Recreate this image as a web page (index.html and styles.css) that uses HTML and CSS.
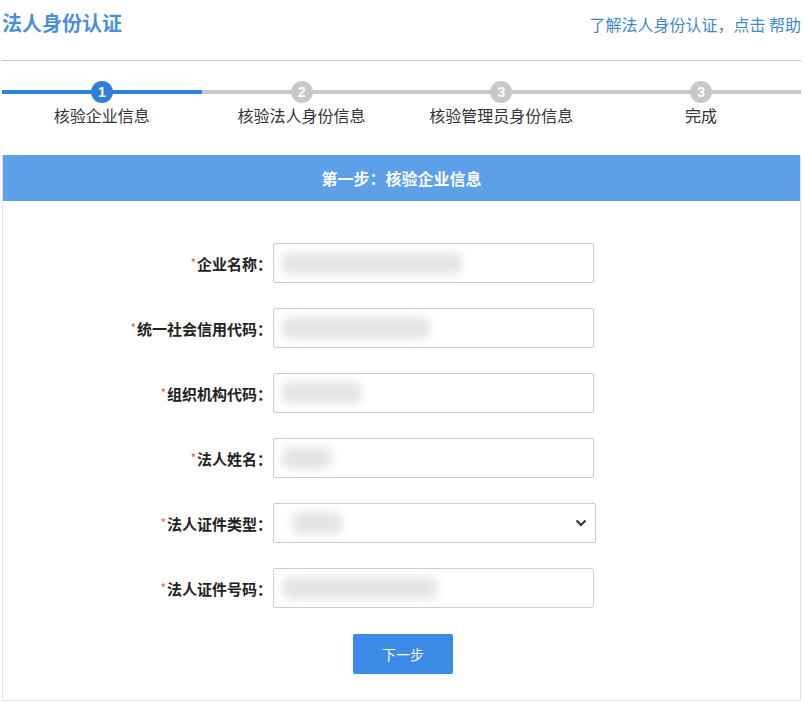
FILE: index.html
```html
<!DOCTYPE html>
<html lang="zh-CN">
<head>
<meta charset="utf-8">
<title>法人身份认证</title>
<link rel="stylesheet" href="styles.css">
</head>
<body>
<div class="page">
  <header class="top">
    <h1 class="title">法人身份认证</h1>
    <a class="help" href="#">了解法人身份认证，点击 帮助</a>
  </header>
  <div class="rule"></div>

  <ol class="steps">
    <li class="step done">
      <div class="track"><span class="dot">1</span></div>
      <div class="label">核验企业信息</div>
    </li>
    <li class="step">
      <div class="track"><span class="dot">2</span></div>
      <div class="label">核验法人身份信息</div>
    </li>
    <li class="step">
      <div class="track"><span class="dot">3</span></div>
      <div class="label">核验管理员身份信息</div>
    </li>
    <li class="step">
      <div class="track"><span class="dot">3</span></div>
      <div class="label">完成</div>
    </li>
  </ol>

  <section class="panel">
    <div class="panel-head">第一步：核验企业信息</div>
    <div class="form">
      <label class="lbl"><i>*</i>企业名称：</label>
      <div class="field"><span class="blur w185"></span></div>

      <label class="lbl"><i>*</i>统一社会信用代码：</label>
      <div class="field"><span class="blur w150"></span></div>

      <label class="lbl"><i>*</i>组织机构代码：</label>
      <div class="field"><span class="blur w85"></span></div>

      <label class="lbl"><i>*</i>法人姓名：</label>
      <div class="field"><span class="blur w50"></span></div>

      <label class="lbl"><i>*</i>法人证件类型：</label>
      <div class="field select"><span class="blur w60 indent"></span>
        <svg class="chev" width="12" height="8" viewBox="0 0 12 8"><path d="M1.5 1.5 L6 6 L10.5 1.5" fill="none" stroke="#333" stroke-width="2"/></svg>
      </div>

      <label class="lbl"><i>*</i>法人证件号码：</label>
      <div class="field"><span class="blur w160"></span></div>

      <div class="actions"><button class="btn" type="button">下一步</button></div>
    </div>
  </section>
</div>
</body>
</html>
```

FILE: styles.css
```css
* { box-sizing: border-box; }
html, body { margin: 0; padding: 0; background: #fff; }
body {
  font-family: "Noto Sans CJK SC", "Noto Sans", "Liberation Sans", sans-serif;
  color: #333;
}
.page { width: 805px; padding: 0 4px 0 2px; }

.top {
  height: 44px;
  display: flex;
  align-items: center;
  justify-content: space-between;
}
.title {
  margin: 0;
  font-size: 20px;
  font-weight: bold;
  color: #4a8fdc;
}
.help {
  font-size: 16px;
  color: #3f88c9;
  text-decoration: none;
  padding-top: 4px;
}
.rule { margin-top: 16px; height: 1px; background: #c9c9c9; }

.steps {
  list-style: none;
  margin: 20px 0 0;
  padding: 0;
  display: grid;
  grid-template-columns: repeat(4, 1fr);
}
.step { display: flex; flex-direction: column; align-items: center; }
.track {
  width: 100%;
  height: 22px;
  display: flex;
  justify-content: center;
  background: linear-gradient(to bottom, transparent 9px, #c8c8c8 9px, #c8c8c8 13px, transparent 13px);
}
.dot {
  width: 22px;
  height: 22px;
  border-radius: 50%;
  background: #c8c8c8;
  color: #fff;
  font-family: "Liberation Sans", sans-serif;
  font-weight: bold;
  font-size: 14px;
  line-height: 22px;
  text-align: center;
}
.step.done .track {
  background: linear-gradient(to bottom, transparent 9px, #2f80d9 9px, #2f80d9 13px, transparent 13px);
}
.step.done .dot { background: #2f80d9; }
.label { font-size: 16px; line-height: 24px; color: #333; }

.panel {
  margin-top: 28px;
  border: 1px solid #e3e3e3;
  border-top: none;
}
.panel-head {
  height: 46px;
  background: #5ca0ea;
  color: #fff;
  font-size: 16px;
  font-weight: bold;
  display: flex;
  align-items: center;
  justify-content: center;
}
.form {
  padding: 42px 0 26px;
  display: grid;
  grid-template-columns: 269px 321px;
  column-gap: 1px;
  row-gap: 25px;
  align-items: center;
}
.lbl {
  text-align: right;
  font-size: 15px;
  font-weight: bold;
  color: #222;
}
.lbl i { font-style: normal; color: #e05a5a; font-weight: normal; font-size: 12px; vertical-align: 2px; margin-right: 1px; }
.field {
  height: 40px;
  border: 1px solid #cdc9d2;
  border-radius: 2px;
  display: flex;
  align-items: center;
  padding-left: 8px;
  background: #fff;
}
.field.select { width: 323px; justify-content: space-between; padding-right: 8px; }
.blur {
  display: block;
  height: 22px;
  background: #e4e4e6;
  border-radius: 8px;
  filter: blur(5px);
}
.blur.indent { margin-left: 10px; }
.w185 { width: 180px; }
.w150 { width: 148px; }
.w85 { width: 80px; }
.w50 { width: 50px; }
.w60 { width: 50px; }
.w160 { width: 155px; }
.chev { flex: none; }

.actions { grid-column: 2; padding-left: 80px; margin-top: 1px; }
.btn {
  display: block;
  width: 100px;
  height: 40px;
  border: none;
  border-radius: 2px;
  background: #3a8ae6;
  color: #fff;
  font-family: inherit;
  font-size: 14px;
  cursor: pointer;
}
```
